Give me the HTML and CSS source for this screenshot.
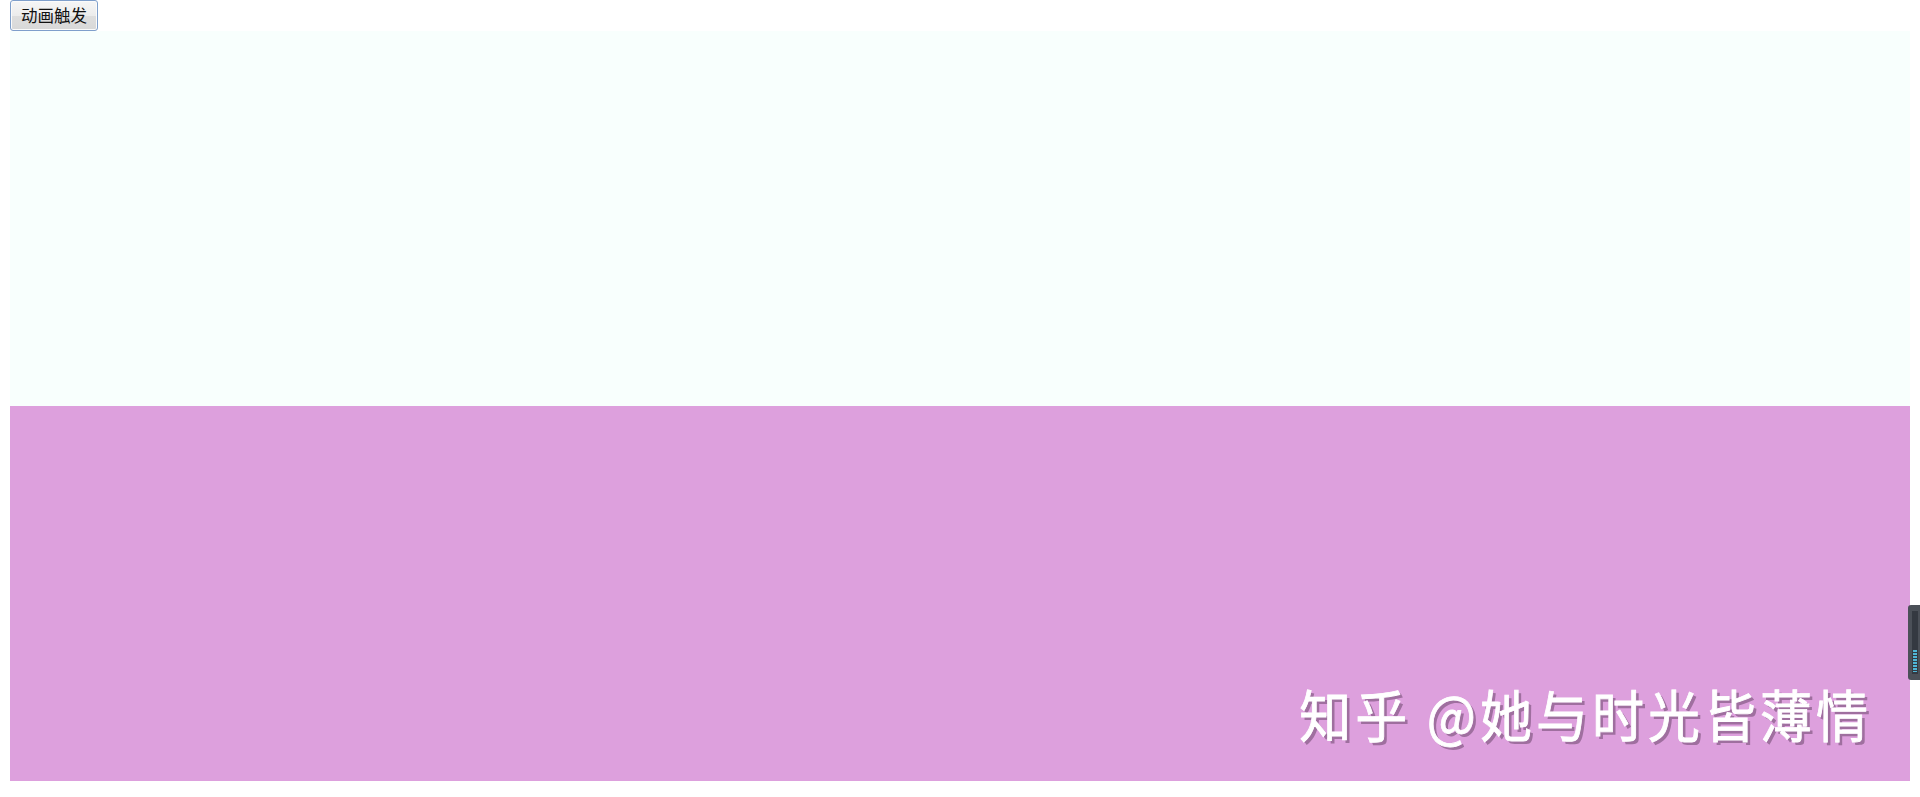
FILE: index.html
```html
<!DOCTYPE html>
<html lang="zh">
<head>
<meta charset="utf-8">
<title>动画触发</title>
<link rel="stylesheet" href="styles.css">
</head>
<body>
<button class="trigger" type="button">动画触发</button>
<div class="box box-top"></div>
<div class="box box-bottom">
  <div class="watermark">知乎 @她与时光皆薄情</div>
</div>
<div class="side-widget"><div class="side-track"><div class="side-dots"></div></div></div>
</body>
</html>
```
FILE: styles.css
```css
html, body {
  margin: 0;
  padding: 0;
  background: #ffffff;
  overflow: hidden;
}
body {
  padding: 0 10px;
  height: 797px;
  position: relative;
  font-family: "Noto Sans CJK SC", "Noto Sans", sans-serif;
}
.trigger {
  display: block;
  box-sizing: border-box;
  width: 88px;
  height: 31px;
  margin: 0;
  padding: 0;
  border: 1px solid #7f9fcb;
  border-radius: 3px;
  background: linear-gradient(#f6f6f6 0%, #ececec 50%, #dedede 51%, #d8d8d8 100%);
  box-shadow: inset 0 0 0 1px #fbfbfb;
  font-family: "Noto Sans CJK SC", sans-serif;
  font-size: 16.5px;
  line-height: 29px;
  color: #111111;
  letter-spacing: 0;
}
.box {
  height: 375px;
  width: 100%;
}
.box-top {
  background: #f8fffd;
}
.box-bottom {
  background: #dda0dd;
  display: flex;
  justify-content: flex-end;
  align-items: flex-end;
}
.watermark {
  color: #ffffff;
  font-family: "Noto Sans CJK SC", sans-serif;
  font-size: 52px;
  font-weight: 400;
  -webkit-text-stroke: 0.8px #ffffff;
  line-height: 1;
  letter-spacing: 4px;
  text-shadow: 3px 3px 0 #9f6f9f;
  margin: 0 38px 40px 0;
  transform: scaleY(1.08);
  transform-origin: bottom;
  white-space: nowrap;
}
.side-widget {
  position: absolute;
  right: 0;
  top: 605px;
  width: 12px;
  height: 75px;
  background: #4b5058;
  border-radius: 3px 0 0 3px;
  box-sizing: border-box;
  padding: 6px 0 6px 4px;
}
.side-track {
  width: 6px;
  height: 100%;
  background: #343941;
  position: relative;
}
.side-dots {
  position: absolute;
  left: 1px;
  right: 1px;
  bottom: 2px;
  height: 22px;
  background: repeating-linear-gradient(#4fb7d8 0 2px, #343941 2px 3px);
}
```
